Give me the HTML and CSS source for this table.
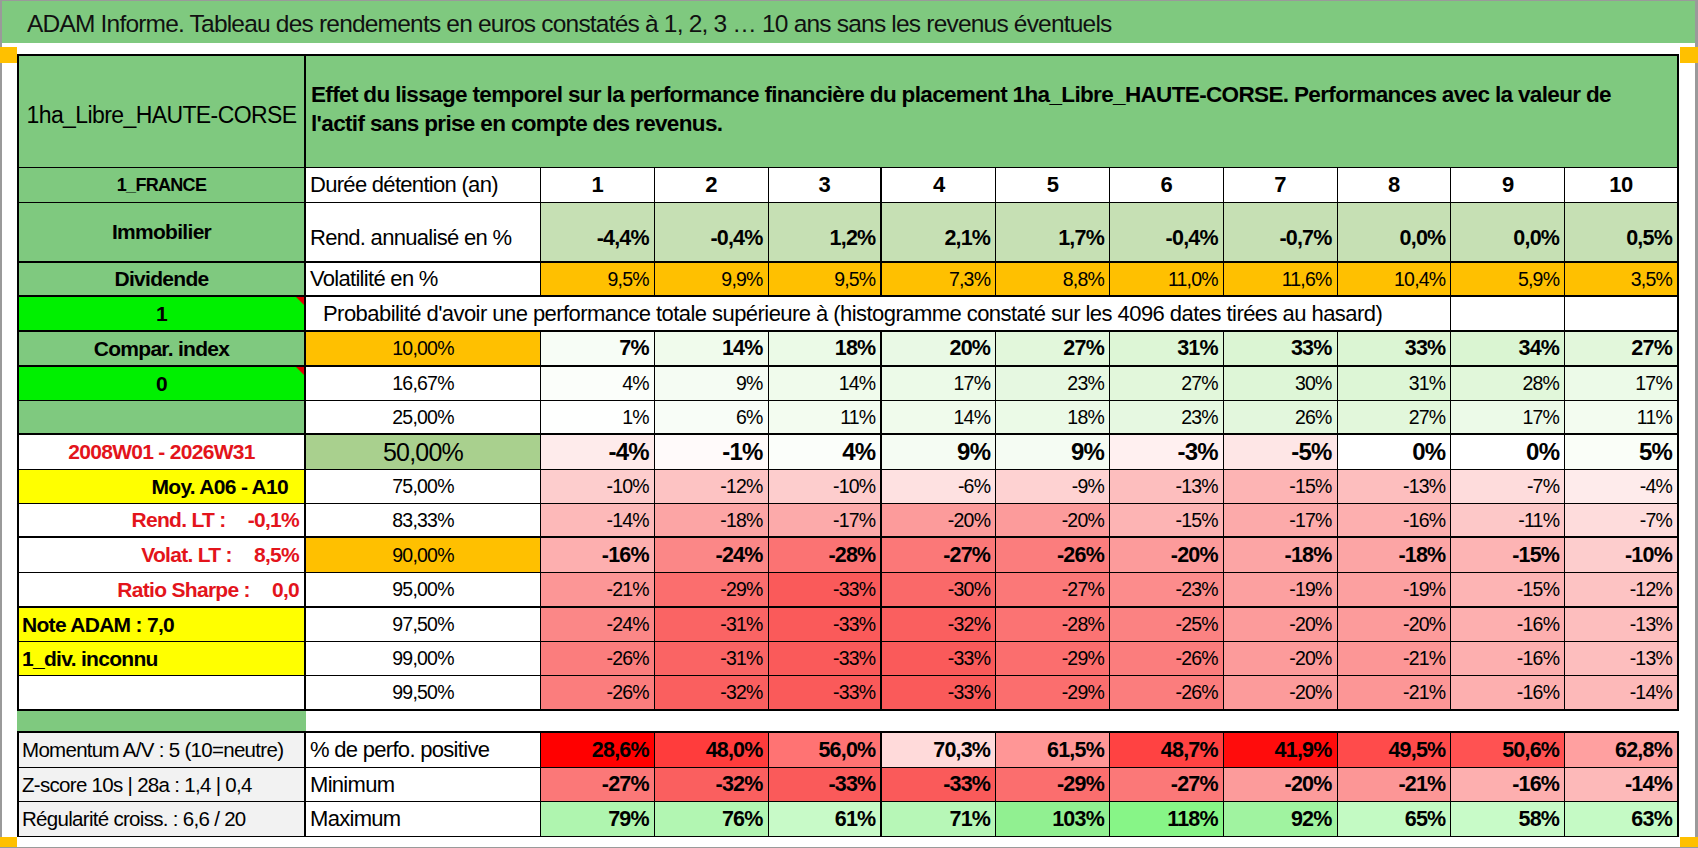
FILE: index.html
```html
<!DOCTYPE html>
<html lang="fr">
<head>
<meta charset="utf-8">
<title>ADAM Informe</title>
<link rel="stylesheet" href="styles.css">
</head>
<body>
<div class="frame">
  <div class="title">ADAM Informe. Tableau des rendements en euros constatés à 1, 2, 3 … 10 ans sans les revenus éventuels</div>
  <div class="spacer"></div>
  <div class="sheet">
    <div class="row hdr">
      <div class="c a g big">1ha_Libre_HAUTE-CORSE</div>
      <div class="c g intro">Effet du lissage temporel sur la performance financière du placement 1ha_Libre_HAUTE-CORSE. Performances avec la valeur de<br>l'actif sans prise en compte des revenus.</div>
    </div>
    <div class="row">
      <div class="c a g fr">1_FRANCE</div>
      <div class="c b">Durée détention (an)</div>
      <div class="c hn">1</div><div class="c hn">2</div><div class="c hn">3</div><div class="c hn">4</div><div class="c hn">5</div>
      <div class="c hn">6</div><div class="c hn">7</div><div class="c hn">8</div><div class="c hn">9</div><div class="c hn">10</div>
    </div>
    <div class="row rend thick bold">
      <div class="c a g">Immobilier</div>
      <div class="c b">Rend. annualisé en %</div>
      <div class="c v lg">-4,4%</div><div class="c v lg">-0,4%</div><div class="c v lg">1,2%</div><div class="c v lg">2,1%</div><div class="c v lg">1,7%</div>
      <div class="c v lg">-0,4%</div><div class="c v lg">-0,7%</div><div class="c v lg">0,0%</div><div class="c v lg">0,0%</div><div class="c v lg">0,5%</div>
    </div>
    <div class="row thick">
      <div class="c a g">Dividende</div>
      <div class="c b">Volatilité en %</div>
      <div class="c v org">9,5%</div><div class="c v org">9,9%</div><div class="c v org">9,5%</div><div class="c v org">7,3%</div><div class="c v org">8,8%</div>
      <div class="c v org">11,0%</div><div class="c v org">11,6%</div><div class="c v org">10,4%</div><div class="c v org">5,9%</div><div class="c v org">3,5%</div>
    </div>
    <div class="row thick">
      <div class="c a lime flag">1</div>
      <div class="c prob">Probabilité d'avoir une performance totale supérieure à (histogramme constaté sur les 4096 dates tirées au hasard)</div>
      <div class="c"></div><div class="c"></div>
    </div>
    <div class="row thick bold">
      <div class="c a g">Compar. index</div>
      <div class="c q org">10,00%</div>
      <div class="c v p7">7%</div><div class="c v p14">14%</div><div class="c v p18">18%</div><div class="c v p20">20%</div><div class="c v p27">27%</div>
      <div class="c v p31">31%</div><div class="c v p33">33%</div><div class="c v p33">33%</div><div class="c v p34">34%</div><div class="c v p27">27%</div>
    </div>
    <div class="row">
      <div class="c a lime flag">0</div>
      <div class="c q">16,67%</div>
      <div class="c v p4">4%</div><div class="c v p9">9%</div><div class="c v p14">14%</div><div class="c v p17">17%</div><div class="c v p23">23%</div>
      <div class="c v p27">27%</div><div class="c v p30">30%</div><div class="c v p31">31%</div><div class="c v p28">28%</div><div class="c v p17">17%</div>
    </div>
    <div class="row thick">
      <div class="c a g"></div>
      <div class="c q">25,00%</div>
      <div class="c v p1">1%</div><div class="c v p6">6%</div><div class="c v p11">11%</div><div class="c v p14">14%</div><div class="c v p18">18%</div>
      <div class="c v p23">23%</div><div class="c v p26">26%</div><div class="c v p27">27%</div><div class="c v p17">17%</div><div class="c v p11">11%</div>
    </div>
    <div class="row mid">
      <div class="c a red">2008W01 - 2026W31</div>
      <div class="c q mg">50,00%</div>
      <div class="c v n4">-4%</div><div class="c v n1">-1%</div><div class="c v p4">4%</div><div class="c v p9">9%</div><div class="c v p9">9%</div>
      <div class="c v n3">-3%</div><div class="c v n5">-5%</div><div class="c v">0%</div><div class="c v">0%</div><div class="c v p5">5%</div>
    </div>
    <div class="row">
      <div class="c a yel right moy">Moy. A06 - A10</div>
      <div class="c q">75,00%</div>
      <div class="c v n10">-10%</div><div class="c v n12">-12%</div><div class="c v n10">-10%</div><div class="c v n6">-6%</div><div class="c v n9">-9%</div>
      <div class="c v n13">-13%</div><div class="c v n15">-15%</div><div class="c v n13">-13%</div><div class="c v n7">-7%</div><div class="c v n4">-4%</div>
    </div>
    <div class="row thick">
      <div class="c a red right"><span>Rend. LT :</span><span class="kv">-0,1%</span></div>
      <div class="c q">83,33%</div>
      <div class="c v n14">-14%</div><div class="c v n18">-18%</div><div class="c v n17">-17%</div><div class="c v n20">-20%</div><div class="c v n20">-20%</div>
      <div class="c v n15">-15%</div><div class="c v n17">-17%</div><div class="c v n16">-16%</div><div class="c v n11">-11%</div><div class="c v n7">-7%</div>
    </div>
    <div class="row bold">
      <div class="c a red right"><span>Volat. LT :</span><span class="kv">8,5%</span></div>
      <div class="c q org">90,00%</div>
      <div class="c v n16">-16%</div><div class="c v n24">-24%</div><div class="c v n28">-28%</div><div class="c v n27">-27%</div><div class="c v n26">-26%</div>
      <div class="c v n20">-20%</div><div class="c v n18">-18%</div><div class="c v n18">-18%</div><div class="c v n15">-15%</div><div class="c v n10">-10%</div>
    </div>
    <div class="row thick">
      <div class="c a red right"><span>Ratio Sharpe :</span><span class="kv">0,0</span></div>
      <div class="c q">95,00%</div>
      <div class="c v n21">-21%</div><div class="c v n29">-29%</div><div class="c v n33">-33%</div><div class="c v n30">-30%</div><div class="c v n27">-27%</div>
      <div class="c v n23">-23%</div><div class="c v n19">-19%</div><div class="c v n19">-19%</div><div class="c v n15">-15%</div><div class="c v n12">-12%</div>
    </div>
    <div class="row">
      <div class="c a yel left">Note ADAM : 7,0</div>
      <div class="c q">97,50%</div>
      <div class="c v n24">-24%</div><div class="c v n31">-31%</div><div class="c v n33">-33%</div><div class="c v n32">-32%</div><div class="c v n28">-28%</div>
      <div class="c v n25">-25%</div><div class="c v n20">-20%</div><div class="c v n20">-20%</div><div class="c v n16">-16%</div><div class="c v n13">-13%</div>
    </div>
    <div class="row">
      <div class="c a yel left">1_div. inconnu</div>
      <div class="c q">99,00%</div>
      <div class="c v n26">-26%</div><div class="c v n31">-31%</div><div class="c v n33">-33%</div><div class="c v n33">-33%</div><div class="c v n29">-29%</div>
      <div class="c v n26">-26%</div><div class="c v n20">-20%</div><div class="c v n21">-21%</div><div class="c v n16">-16%</div><div class="c v n13">-13%</div>
    </div>
    <div class="row thick">
      <div class="c a"></div>
      <div class="c q">99,50%</div>
      <div class="c v n26">-26%</div><div class="c v n32">-32%</div><div class="c v n33">-33%</div><div class="c v n33">-33%</div><div class="c v n29">-29%</div>
      <div class="c v n26">-26%</div><div class="c v n20">-20%</div><div class="c v n21">-21%</div><div class="c v n16">-16%</div><div class="c v n14">-14%</div>
    </div>
    <div class="row gaprow">
      <div class="c g gapa"></div>
      <div class="c gapb"></div>
    </div>
    <div class="row bold">
      <div class="c a gray note">Momentum A/V : 5 (10=neutre)</div>
      <div class="c b">% de perfo. positive</div>
      <div class="c v" style="background:#ff0000">28,6%</div><div class="c v" style="background:#ff3c3c">48,0%</div><div class="c v" style="background:#ff7373">56,0%</div><div class="c v" style="background:#ffdada">70,3%</div><div class="c v" style="background:#ff9696">61,5%</div>
      <div class="c v" style="background:#ff4242">48,7%</div><div class="c v" style="background:#ff0c0c">41,9%</div><div class="c v" style="background:#ff4b4b">49,5%</div><div class="c v" style="background:#ff5252">50,6%</div><div class="c v" style="background:#ffa0a0">62,8%</div>
    </div>
    <div class="row bold">
      <div class="c a gray note">Z-score 10s | 28a : 1,4 | 0,4</div>
      <div class="c b">Minimum</div>
      <div class="c v n27">-27%</div><div class="c v n32">-32%</div><div class="c v n33">-33%</div><div class="c v n33">-33%</div><div class="c v n29">-29%</div>
      <div class="c v n27">-27%</div><div class="c v n20">-20%</div><div class="c v n21">-21%</div><div class="c v n16">-16%</div><div class="c v n14">-14%</div>
    </div>
    <div class="row bold">
      <div class="c a gray note">Régularité croiss. : 6,6 / 20</div>
      <div class="c b">Maximum</div>
      <div class="c v" style="background:#aff5af">79%</div><div class="c v" style="background:#b2f6b2">76%</div><div class="c v" style="background:#c8fac8">61%</div><div class="c v" style="background:#b7f7b7">71%</div><div class="c v" style="background:#91f091">103%</div>
      <div class="c v" style="background:#87f587">118%</div><div class="c v" style="background:#a0f3a0">92%</div><div class="c v" style="background:#c3fac3">65%</div><div class="c v" style="background:#c8fbc8">58%</div><div class="c v" style="background:#c5fac5">63%</div>
    </div>
  </div>
  <div class="corner tl"></div>
  <div class="corner tr"></div>
  <div class="corner bl"></div>
  <div class="corner br"></div>
</div>
</body>
</html>
```

FILE: styles.css
```css
* { box-sizing: border-box; margin: 0; padding: 0; }
html, body { width: 1698px; height: 848px; overflow: hidden; background: #fff; }
body {
  font-family: "Liberation Sans", Arial, sans-serif;
  color: #000;
}
.frame {
  position: relative;
  width: 1698px;
  height: 848px;
  border-style: solid;
  border-color: #9a9a9a;
  border-width: 1px 3px 1px 2px;
}
.title {
  height: 42px;
  background: #7fc97f;
  display: flex;
  align-items: center;
  padding: 3px 0 0 25px;
  font-size: 24.5px;
  letter-spacing: -0.8px;
  white-space: nowrap;
  color: #111;
}
.spacer { height: 11px; }

.sheet {
  display: grid;
  margin-left: 15px;
  width: 1662px;
  grid-template-columns: 289px 235px repeat(10, 113.8px);
  grid-template-rows: 114px 35px 60px 34px 35px 35px 34px 34px 35px 34px 34px 35px 35px 34px 34px 35px 22px 35px 34px 35px;
}
.row { display: contents; }

.c {
  position: relative;
  display: flex;
  align-items: center;
  border-right: 1px solid #000;
  border-bottom: 1px solid #000;
  padding: 0 5px;
  white-space: nowrap;
  font-size: 19.5px;
  letter-spacing: -0.8px;
  background: #fff;
}
.row > .c:last-child { border-right-width: 2px; }
.row > .c:nth-child(5) { border-right-width: 2px; }
.hdr > .c { border-top: 2px solid #000; }
.thick > .c { border-bottom-width: 2px; }

/* column A */
.a {
  border-left: 2px solid #000;
  border-right-width: 2px;
  justify-content: center;
  font-weight: bold;
  font-size: 21px;
  letter-spacing: -0.7px;
}
.a.big { font-weight: normal; font-size: 23px; letter-spacing: -0.6px; padding-top: 8px; }
.a.fr { font-size: 18px; }
.a.red { color: #e3141b; }
.a.right { justify-content: flex-end; padding-right: 5px; }
.a.moy { padding-right: 16px; }
.a.left { justify-content: flex-start; padding-left: 3px; }
.a.note { justify-content: flex-start; padding-left: 3px; font-weight: normal; font-size: 20.5px; }
.kv { margin-left: 22px; }
.flag::after {
  content: "";
  position: absolute;
  top: 0;
  right: 0;
  border-left: 8px solid transparent;
  border-top: 8px solid #e00000;
}

/* column B */
.b { font-size: 22px; letter-spacing: -0.7px; padding-left: 4px; }
.q { justify-content: center; font-size: 19.5px; }
.mid .q { font-size: 25px; }

/* header */
.intro {
  grid-column: span 11;
  align-items: flex-start;
  padding: 24px 10px 0 5px;
  font-weight: bold;
  font-size: 22.5px;
  letter-spacing: -0.65px;
  line-height: 29px;
}
.hn { justify-content: center; font-weight: bold; font-size: 22px; letter-spacing: -0.5px; }
.prob { grid-column: span 9; font-size: 22px; letter-spacing: -0.55px; padding-left: 17px; }

/* values */
.v { justify-content: flex-end; padding-right: 5px; }
.bold .v { font-weight: bold; font-size: 21.5px; }
.mid .v { font-weight: bold; font-size: 24px; }
.rend .v, .rend .b { padding-top: 12px; }

/* gap row */
.gaprow > .c { border-right: none; border-bottom-width: 2px; }
.gapb { grid-column: span 11; }

/* fills */
.g { background: #7fc97f; }
.lime { background: #00f000; }
.yel { background: #ffff00; }
.org { background: #ffc000; }
.gray { background: #f2f2f2; }
.lg { background: #c6e0b4; }
.mg { background: #a9d08e; }

.p1 { background: #feffFE; }
.p4 { background: #fbfefa; }
.p5 { background: #fafef8; }
.p6 { background: #f8fdf7; }
.p7 { background: #f7fdf6; }
.p9 { background: #f5fcf3; }
.p11 { background: #f3fcf0; }
.p14 { background: #f0fbec; }
.p17 { background: #ecfae8; }
.p18 { background: #ebfae7; }
.p20 { background: #e9f9e5; }
.p23 { background: #e6f8e1; }
.p26 { background: #e3f7dd; }
.p27 { background: #e2f7db; }
.p28 { background: #e1f7da; }
.p30 { background: #def6d7; }
.p31 { background: #ddf6d6; }
.p33 { background: #dbf5d3; }
.p34 { background: #daf5d2; }

.n1 { background: #fffafa; }
.n3 { background: #fff0f0; }
.n4 { background: #feebeb; }
.n5 { background: #fee6e6; }
.n6 { background: #fee1e1; }
.n7 { background: #fedcdc; }
.n9 { background: #fed2d2; }
.n10 { background: #fdcdcd; }
.n11 { background: #fdc8c8; }
.n12 { background: #fdc3c3; }
.n13 { background: #fdbebe; }
.n14 { background: #fdb9b9; }
.n15 { background: #fdb4b4; }
.n16 { background: #fdafaf; }
.n17 { background: #fcaaaa; }
.n18 { background: #fca5a5; }
.n19 { background: #fca0a0; }
.n20 { background: #fc9b9b; }
.n21 { background: #fc9696; }
.n23 { background: #fc8c8c; }
.n24 { background: #fb8787; }
.n25 { background: #fb8282; }
.n26 { background: #fb7d7d; }
.n27 { background: #fb7878; }
.n28 { background: #fb7373; }
.n29 { background: #fb6e6e; }
.n30 { background: #fa6969; }
.n31 { background: #fa6464; }
.n32 { background: #fa5f5f; }
.n33 { background: #fa5a5a; }

/* selection handles */
.corner { position: absolute; background: #ffc000; }
.tl { left: -2px; top: 46px; width: 17px; height: 16px; }
.tr { right: -3px; top: 46px; width: 18px; height: 16px; }
.bl { left: -2px; top: 836px; width: 17px; height: 10px; }
.br { right: -3px; top: 836px; width: 18px; height: 10px; }
```
